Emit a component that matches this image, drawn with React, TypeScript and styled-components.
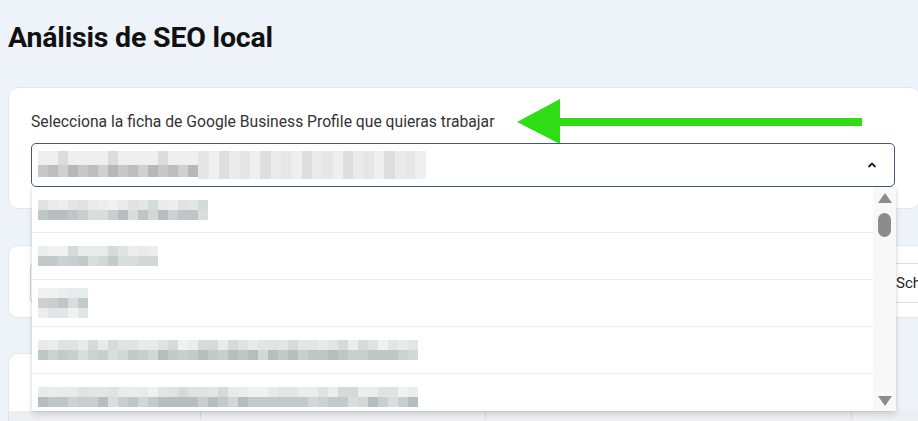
import React from "react";
import styled, {createGlobalStyle} from "styled-components";

const GlobalStyle = createGlobalStyle`
  html, body {
    margin: 0;
    padding: 0;
    background: #eef3fa;
    overflow: hidden;
  }
  body {
    font-family: Roboto, "Liberation Sans", Arial, sans-serif;
    color: #222;
  }
  * { box-sizing: border-box; }
`;

const Page = styled.main`
  width: 918px;
  height: 421px;
  padding: 0 0 0 8px;
  overflow: hidden;
`;

const Title = styled.h1`
  margin: 0;
  padding-top: 21px;
  height: 87px;
  font-size: 28.5px;
  font-weight: 700;
  color: #111;
  letter-spacing: -0.2px;
`;

const Card = styled.section<{ $w: number; $h: number }>`
  width: ${p => p.$w}px;
  height: ${p => p.$h}px;
  background: #fff;
  border: 1px solid #e3e8ef;
  border-radius: 10px;
`;

const SelectCard = styled(Card)`
  position: relative;
  padding: 24px 0 0 22px;
`;

const Label = styled.div`
  font-size: 15.7px;
  color: #333;
  height: 31px;
  display: flex;
  align-items: flex-start;
`;

const SelectBox = styled.div`
  position: relative;
  width: 864px;
  height: 44px;
  border: 1px solid #3f5b78;
  border-radius: 5px;
  display: flex;
  align-items: center;
  justify-content: space-between;
  padding: 0 16px 0 6px;
`;

const Caret = styled.svg`
  width: 12px;
  height: 12px;
`;

const Dropdown = styled.div`
  position: absolute;
  top: 43px;
  left: 0;
  width: 864px;
  height: 224px;
  background: #fff;
  box-shadow: 0 3px 6px rgba(0, 0, 0, 0.14), 0 0 1px rgba(0, 0, 0, 0.2);
  display: flex;
  z-index: 10;
`;

const List = styled.ul`
  list-style: none;
  margin: 0;
  padding: 0;
  flex: 1;
`;

const Item = styled.li<{ $first?: boolean }>`
  height: ${p => (p.$first ? 46 : 47)}px;
  border-bottom: 1px solid #ececec;
  display: flex;
  align-items: center;
  padding-left: 6px;
`;

const Scrollbar = styled.div`
  width: 23px;
  background: #f8f8f8;
  display: flex;
  flex-direction: column;
  align-items: center;
  padding: 6px 0 5px;
`;

const Thumb = styled.div`
  width: 13px;
  height: 24px;
  border-radius: 7px;
  background: #8c8c8c;
  margin-top: 10px;
`;

const Spacer = styled.div`
  flex: 1;
`;

const Pixels = styled.div`
  display: flex;
  flex-direction: column;
  filter: blur(0.6px);
`;

const PixelRow = styled.div`
  display: flex;
`;

const Cell = styled.span`
  width: 10px;
  height: 10px;
  display: block;
`;

const Arrow = styled.svg`
  position: absolute;
  left: 508px;
  top: 11px;
  width: 345px;
  height: 46px;
  overflow: visible;
`;

const Gap = styled.div<{ $h: number }>`
  height: ${p => p.$h}px;
`;

const FilterCard = styled(Card)`
  display: flex;
  align-items: center;
  padding-left: 21px;
`;

const FilterInput = styled.div`
  width: 865px;
  height: 40px;
  border: 1px solid #cfd4da;
  border-radius: 4px;
  margin-top: 2px;
`;

const FilterButton = styled.div`
  height: 40px;
  margin-top: 2px;
  padding-left: 1px;
  display: flex;
  align-items: center;
  border-top: 1px solid #dcdfe4;
  border-bottom: 1px solid #dcdfe4;
  font-size: 15px;
  color: #222;
`;

const TableCard = styled(Card)`
  border-bottom: none;
  border-radius: 10px 10px 0 0;
`;

const TableHead = styled.div`
  width: 960px;
  height: 12px;
  display: grid;
  grid-template-columns: 192px 285px 366px 1fr;
  background: #eceef2;
  border-left: 1px solid #dfe3e8;
  > span { border-right: 1px solid #d8dbe0; }
`;

const topShades = ["#eceeee", "#e3e6e7", "#dfe3e4", "#e8ebeb", "#d5dadb", "#f0f1f1"];
const lowShades = ["#c9cfd0", "#bfc6c8", "#d2d7d8", "#b6bec0", "#ccd2d3", "#c3cacb", "#d9dddd"];

function rnd(seed: number) {
    let s = seed;
    return () => {
        s = (s * 9301 + 49297) % 233280;
        return s / 233280;
    };
}

const PixelText: React.FC<{ cells: number; rows?: number; seed: number }> = ({cells, rows = 2, seed}) => {
    const r = rnd(seed);
    return (
        <Pixels>
            {Array.from({length: rows}).map((_, ri) => {
                const dark = rows === 2 ? ri === 1 : ri === 1;
                const palette = dark ? lowShades : topShades;
                return (
                    <PixelRow key={ri}>
                        {Array.from({length: cells}).map((__, ci) => (
                            <Cell key={ci} style={{background: palette[Math.floor(r() * palette.length)]}}/>
                        ))}
                    </PixelRow>
                );
            })}
        </Pixels>
    );
};

const SelectValue: React.FC = () => (
    <PixelRow>
        <Pixels>
            <PixelRow>{Array.from({length: 16}).map((_, i) => <Cell key={i} style={{background: i % 5 === 2 ? "#dcdcdc" : "#efefef", height: 14}}/>)}</PixelRow>
            <PixelRow>{Array.from({length: 16}).map((_, i) => <Cell key={i} style={{background: ["#c8c8c8", "#bdbdbd", "#d0d0d0", "#b8b8b8"][i % 4], height: 12}}/>)}</PixelRow>
        </Pixels>
        <Pixels>
            <PixelRow>{Array.from({length: 22}).map((_, i) => <Cell key={i} style={{background: ["#e6e6e6", "#efefef", "#dedede", "#eaeaea"][i % 4], height: 28, width: i % 3 === 0 ? 11 : 10}}/>)}</PixelRow>
        </Pixels>
    </PixelRow>
);

export default function App() {
    return (
        <>
            <GlobalStyle/>
            <Page>
                <Title>Análisis de SEO local</Title>
                <SelectCard $w={912} $h={122}>
                    <Label>Selecciona la ficha de Google Business Profile que quieras trabajar</Label>
                    <Arrow viewBox="0 0 345 46">
                        <polygon points="0,23 43,0 43,45" fill="#2fdd14"/>
                        <rect x="38" y="19" width="307" height="8" fill="#2fdd14"/>
                    </Arrow>
                    <SelectBox>
                        <SelectValue/>
                        <Caret viewBox="0 0 12 12">
                            <path d="M2.5 8 L6 4.5 L9.5 8" fill="none" stroke="#222" strokeWidth="1.8"/>
                        </Caret>
                        <Dropdown>
                            <List>
                                <Item $first><PixelText cells={17} seed={7}/></Item>
                                <Item><PixelText cells={12} seed={23}/></Item>
                                <Item><PixelText cells={5} rows={3} seed={41}/></Item>
                                <Item><PixelText cells={38} seed={59}/></Item>
                                <Item><PixelText cells={38} seed={83}/></Item>
                            </List>
                            <Scrollbar>
                                <svg width="14" height="10" viewBox="0 0 14 10"><polygon points="7,0 14,10 0,10" fill="#8c8c8c"/></svg>
                                <Thumb/>
                                <Spacer/>
                                <svg width="14" height="10" viewBox="0 0 14 10"><polygon points="0,0 14,0 7,10" fill="#8c8c8c"/></svg>
                            </Scrollbar>
                        </Dropdown>
                    </SelectBox>
                </SelectCard>
                <Gap $h={36}/>
                <FilterCard $w={960} $h={73}>
                    <FilterInput/>
                    <FilterButton>Schedule</FilterButton>
                </FilterCard>
                <Gap $h={35}/>
                <TableCard $w={872} $h={58}/>
                <TableHead>
                    <span/>
                    <span/>
                    <span/>
                    <span/>
                </TableHead>
            </Page>
        </>
    );
}
